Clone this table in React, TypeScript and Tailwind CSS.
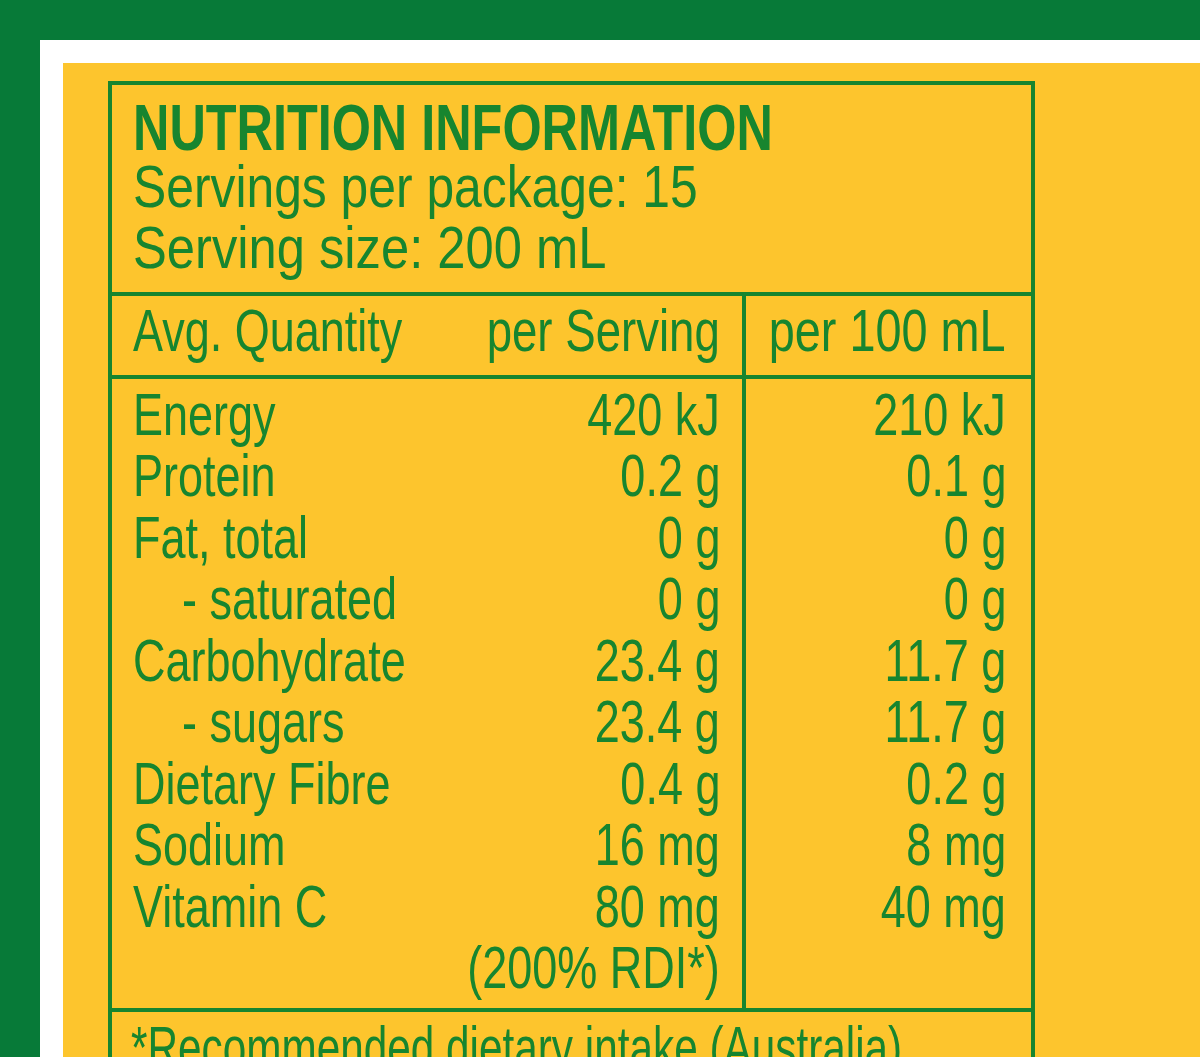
import React from "react";

const rows: { label: string; indent?: boolean; serv: string; per100: string }[] = [
  { label: "Energy", serv: "420 kJ", per100: "210 kJ" },
  { label: "Protein", serv: "0.2 g", per100: "0.1 g" },
  { label: "Fat, total", serv: "0 g", per100: "0 g" },
  { label: "- saturated", indent: true, serv: "0 g", per100: "0 g" },
  { label: "Carbohydrate", serv: "23.4 g", per100: "11.7 g" },
  { label: "- sugars", indent: true, serv: "23.4 g", per100: "11.7 g" },
  { label: "Dietary Fibre", serv: "0.4 g", per100: "0.2 g" },
  { label: "Sodium", serv: "16 mg", per100: "8 mg" },
  { label: "Vitamin C", serv: "80 mg", per100: "40 mg" },
];

function L({ children, className = "" }: { children: React.ReactNode; className?: string }) {
  return <span className={"inline-block origin-left scale-x-[0.75] whitespace-nowrap " + className}>{children}</span>;
}
function R({ children }: { children: React.ReactNode }) {
  return <span className="inline-block shrink-0 origin-right scale-x-[0.75] whitespace-nowrap">{children}</span>;
}

function Row({ left, right, indent }: { left?: string; right: string; indent?: boolean }) {
  return (
    <div className="flex h-[61.5px]">
      <div className={"min-w-0 flex-1 whitespace-nowrap " + (indent ? "pl-[49px]" : "")}>
        {left ? <L>{left}</L> : null}
      </div>
      <div className="shrink-0">
        <R>{right}</R>
      </div>
    </div>
  );
}

export default function App() {
  return (
    <div
      className="h-[1057px] w-[1200px] overflow-hidden bg-[#077a38] pl-[40px] pt-[40px] text-[#17852f]"
      style={{ fontFamily: '"Liberation Sans", Arial, sans-serif' }}
    >
      <div className="h-full w-full bg-white pl-[23px] pt-[23px]">
        <div className="h-full w-full bg-[#fdc52d] pl-[45px] pt-[18px]">
          <div className="w-[927px] border-[4px] border-[#17852f]">
            {/* title block */}
            <div className="h-[207px] overflow-visible pl-[21px] pt-[12px]">
              <div className="h-[59px] whitespace-nowrap text-[65px] font-bold leading-[61px]">
                <span className="inline-block origin-left scale-x-[0.775]">NUTRITION INFORMATION</span>
              </div>
              <div className="h-[61px] whitespace-nowrap text-[60px] leading-[61px]">
                <span className="inline-block origin-left scale-x-[0.83]">Servings per package: 15</span>
              </div>
              <div className="h-[61px] whitespace-nowrap text-[60px] leading-[61px]">
                <span className="inline-block origin-left scale-x-[0.845]">Serving size: 200 mL</span>
              </div>
            </div>
            {/* header row */}
            <div className="flex h-[83px] border-t-[4px] border-[#17852f] text-[60px] leading-[61.5px]">
              <div className="w-[630px] pl-[21px] pr-[22px] pt-[4px]">
                <div className="flex h-[61.5px]">
                  <div className="min-w-0 flex-1 whitespace-nowrap">
                    <L>Avg. Quantity</L>
                  </div>
                  <div className="shrink-0">
                    <span className="inline-block origin-right scale-x-[0.76] whitespace-nowrap">per Serving</span>
                  </div>
                </div>
              </div>
              <div className="flex min-w-0 flex-1 justify-end border-l-[4px] border-[#17852f] pr-[25px] pt-[4px]">
                <span className="inline-block h-[61.5px] shrink-0 origin-right scale-x-[0.78] whitespace-nowrap">
                  per 100 mL
                </span>
              </div>
            </div>
            {/* body */}
            <div className="flex h-[633px] border-t-[4px] border-[#17852f] text-[60px] leading-[61.5px]">
              <div className="w-[630px] pl-[21px] pr-[22px] pt-[4.5px]">
                {rows.map((r) => (
                  <Row key={r.label} left={r.label} right={r.serv} indent={r.indent} />
                ))}
                <Row right="(200% RDI*)" />
              </div>
              <div className="min-w-0 flex-1 border-l-[4px] border-[#17852f] pr-[25px] pt-[4.5px]">
                {rows.map((r) => (
                  <div key={r.label} className="flex h-[61.5px] justify-end">
                    <R>{r.per100}</R>
                  </div>
                ))}
              </div>
            </div>
            {/* footer */}
            <div className="h-[120px] whitespace-nowrap border-t-[4px] border-[#17852f] pl-[19px] pt-[4.5px] text-[60px] leading-[61.5px]">
              <span className="inline-block origin-left scale-x-[0.705] whitespace-nowrap">
                *Recommended dietary intake (Australia)
              </span>
            </div>
          </div>
        </div>
      </div>
    </div>
  );
}
